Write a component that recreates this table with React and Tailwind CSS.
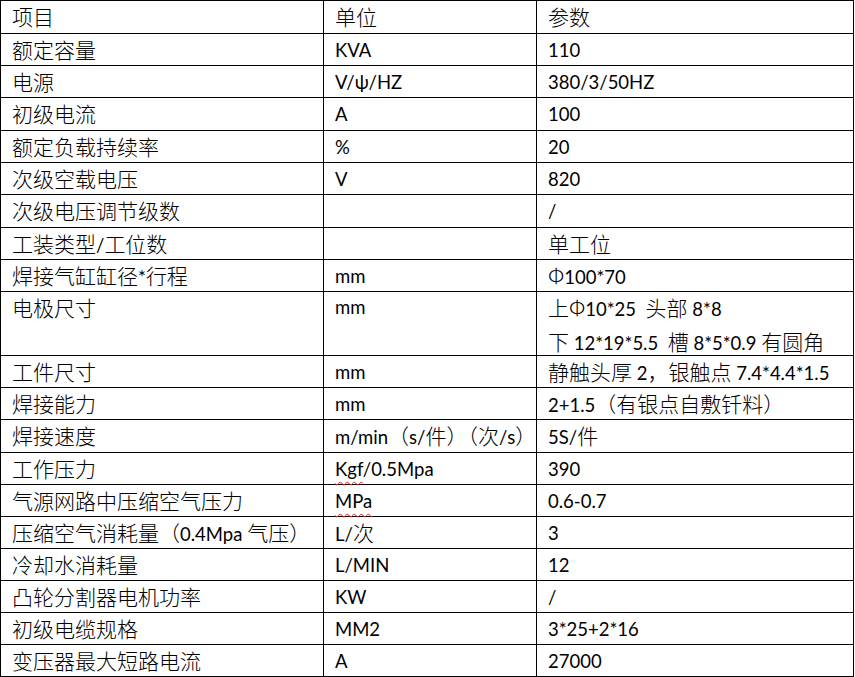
import React from 'react';

// rows: [项目, 单位, 参数, row height incl. bottom border]
const rows = [
    ['项目', '单位', '参数', 'h-[33px]'],
    ['额定容量', 'KVA', '110', 'h-[32px]'],
    ['电源', 'V/ψ/HZ', '380/3/50HZ', 'h-[32px]'],
    ['初级电流', 'A', '100', 'h-[33px]'],
    ['额定负载持续率', '%', '20', 'h-[32px]'],
    ['次级空载电压', 'V', '820', 'h-[32px]'],
    ['次级电压调节级数', '', '/', 'h-[33px]'],
    ['工装类型/工位数', '', '单工位', 'h-[32px]'],
    ['焊接气缸缸径*行程', 'mm', 'Φ100*70', 'h-[32px]'],
    ['电极尺寸', 'mm', ['上Φ10*25  头部 8*8', '下 12*19*5.5  槽 8*5*0.9 有圆角'], 'h-[64px]'],
    ['工件尺寸', 'mm', '静触头厚 2，银触点 7.4*4.4*1.5', 'h-[32px]'],
    ['焊接能力', 'mm', '2+1.5（有银点自敷钎料）', 'h-[32px]'],
    ['焊接速度', 'm/min（s/件）（次/s）', '5S/件', 'h-[33px]'],
    ['工作压力', 'Kgf/0.5Mpa', '390', 'h-[32px]'],
    ['气源网路中压缩空气压力', 'MPa', '0.6-0.7', 'h-[32px]'],
    ['压缩空气消耗量（0.4Mpa 气压）', 'L/次', '3', 'h-[32px]'],
    ['冷却水消耗量', 'L/MIN', '12', 'h-[32px]'],
    ['凸轮分割器电机功率', 'KW', '/', 'h-[32px]'],
    ['初级电缆规格', 'MM2', '3*25+2*16', 'h-[32px]'],
    ['变压器最大短路电流', 'A', '27000', 'h-[32px]'],
];

const CJK = /([\u2E80-\u9FFF\u3000-\u303F\uFF00-\uFFEF\u03A6]+)/;

// Chinese runs in a CJK face, latin runs in a narrower face (Calibri-like)
const Text = ({ s }) => {
    if (s === 'Kgf/0.5Mpa') {
        return (
            <span className="font-['Lato',sans-serif] text-[18.5px]">
                <span className="underline decoration-wavy decoration-[#e02020] decoration-1 underline-offset-[5px]">Kgf</span>/0.5Mpa
            </span>
        );
    }
    if (s === 'MPa') {
        return (
            <span className="font-['Lato',sans-serif] text-[18.5px] underline decoration-wavy decoration-[#e02020] decoration-1 underline-offset-[5px]">MPa</span>
        );
    }
    return s.split(CJK).filter(Boolean).map((part, i) =>
        CJK.test(part) ? (
            <span key={i} className="font-['Noto_Sans_CJK_SC',sans-serif] font-light text-[21px]">{part}</span>
        ) : (
            <span key={i} className="font-['Lato',sans-serif] text-[18.5px]">{part}</span>
        )
    );
};

const Cell = ({ value, top }) => (
    <div className={`border-r border-black pl-[11px] flex flex-col justify-center leading-[31px] whitespace-pre text-black ${top ? 'justify-start' : ''}`}>
        {Array.isArray(value)
            ? value.map((line, i) => <div key={i}><Text s={line} /></div>)
            : <div><Text s={value} /></div>}
    </div>
);

const App = () => {
    return (
        <div className="bg-white w-[855px] h-[677px]">
            <div className="w-[854px] border-l border-t border-black">
                {rows.map(([item, unit, param, h], idx) => {
                    const top = Array.isArray(param);
                    return (
                        <div key={idx} className={`grid grid-cols-[323px_213px_317px] border-b border-black ${h}`}>
                            <Cell value={top ? [item, ''] : item} top={top} />
                            <Cell value={top ? [unit, ''] : unit} top={top} />
                            <Cell value={param} top={top} />
                        </div>
                    );
                })}
            </div>
        </div>
    );
};

export default App;
